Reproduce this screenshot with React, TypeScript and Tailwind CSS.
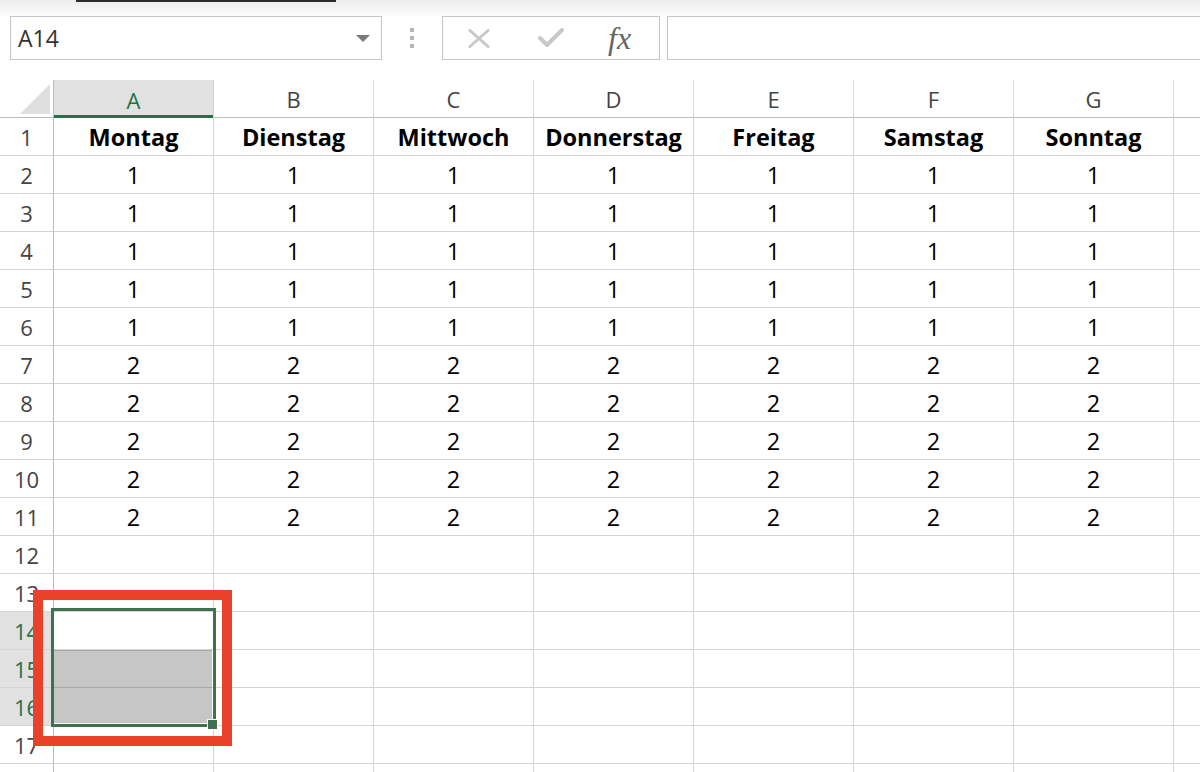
import React from 'react';

const COLS = ['A', 'B', 'C', 'D', 'E', 'F', 'G', 'H'];
const DAYS = ['Montag', 'Dienstag', 'Mittwoch', 'Donnerstag', 'Freitag', 'Samstag', 'Sonntag', ''];

const valueFor = (row: number, col: number) => {
  if (col > 6) return '';
  if (row === 1) return DAYS[col];
  if (row >= 2 && row <= 6) return '1';
  if (row >= 7 && row <= 11) return '2';
  return '';
};

const FormulaBar = () => (
  <div className="relative h-[80px] bg-white">
    <div className="absolute inset-x-0 top-0 h-[16px] bg-gradient-to-b from-[#ececec] to-[#fdfdfd]" />
    <div className="absolute left-[76px] top-0 h-[2px] w-[260px] bg-[#2b2b2b]" />
    <div className="relative flex items-start pt-[16px] pl-[10px]">
      {/* Name box */}
      <div className="flex h-[44px] w-[372px] items-center justify-between border border-[#c6c6c6] bg-white pl-[7px] pr-[11px]">
        <span className="text-[23px] text-[#333]">A14</span>
        <svg width="14" height="7" viewBox="0 0 14 7">
          <polygon points="0,0 14,0 7,7" fill="#7a7a7a" />
        </svg>
      </div>
      {/* Separator dots */}
      <div className="flex w-[60px] flex-col items-center gap-[4px] pt-[12px]">
        <div className="h-[4px] w-[4px] bg-[#b4b4b4]" />
        <div className="h-[4px] w-[4px] bg-[#b4b4b4]" />
        <div className="h-[4px] w-[4px] bg-[#b4b4b4]" />
      </div>
      {/* Cancel / enter / fx */}
      <div className="flex h-[44px] w-[218px] items-center border border-[#c6c6c6] bg-white">
        <svg width="22" height="19" viewBox="0 0 22 19" className="ml-[25px]">
          <path d="M2 1.5 L20 17.5 M20 1.5 L2 17.5" stroke="#c8c8c8" strokeWidth="3" strokeLinecap="round" />
        </svg>
        <svg width="26" height="20" viewBox="0 0 26 20" className="ml-[48px]">
          <path d="M2 10 L9 17 L24 2" stroke="#c8c8c8" strokeWidth="4" fill="none" strokeLinecap="round" strokeLinejoin="round" />
        </svg>
        <span
          className="ml-[44px] text-[32px] italic leading-none text-[#666]"
          style={{ fontFamily: '"Liberation Serif", serif' }}
        >
          fx
        </span>
      </div>
      {/* Formula input */}
      <div className="ml-[7px] h-[44px] flex-1 border border-r-0 border-[#c6c6c6] bg-white" />
    </div>
  </div>
);

export default function App() {
  const rows = Array.from({ length: 18 }, (_, i) => i + 1);
  const selectedRows = [14, 15, 16];

  return (
    <div
      className="relative h-[772px] w-[1200px] overflow-hidden bg-white"
      style={{ fontFamily: '"Open Sans", sans-serif' }}
    >
      <FormulaBar />

      <div className="grid grid-cols-[54px_repeat(8,160px)]">
        {/* Header row */}
        <div className="relative h-[38px] border-r border-b border-[#bdbdbd]">
          <svg width="54" height="38" viewBox="0 0 54 38" className="absolute inset-0">
            <polygon points="50,4 50,34 20,34" fill="#dfdfdf" />
          </svg>
        </div>
        {COLS.map((c, i) =>
          i === 0 ? (
            <div
              key={c}
              className="flex h-[38px] items-center justify-center border-r border-[#d4d4d4] bg-[#e1e1e1] pt-[2px] text-[22px] text-[#217346]"
              style={{ boxShadow: 'inset 0 -3px 0 #217346' }}
            >
              {c}
            </div>
          ) : (
            <div
              key={c}
              className="flex h-[38px] items-center justify-center border-r border-b border-r-[#dadada] border-b-[#bdbdbd] pt-[2px] text-[22px] text-[#444]"
            >
              {c === 'H' ? '' : c}
            </div>
          )
        )}

        {rows.map((r) => (
          <React.Fragment key={r}>
            <div
              className={
                selectedRows.includes(r)
                  ? 'flex h-[38px] items-center justify-center border-r border-b border-r-[#bdbdbd] border-b-[#d4d4d4] bg-[#e1e1e1] pt-[2px] text-[22px] text-[#217346]'
                  : 'flex h-[38px] items-center justify-center border-r border-b border-r-[#bdbdbd] border-b-[#d4d4d4] pt-[2px] text-[22px] text-[#444]'
              }
            >
              {r < 18 ? r : ''}
            </div>
            {COLS.map((c, ci) => (
              <div
                key={c}
                className={
                  r === 1
                    ? 'flex h-[38px] items-center justify-center border-r border-b border-[#d4d4d4] pt-[2px] text-[23.5px] font-bold text-black'
                    : 'flex h-[38px] items-center justify-center border-r border-b border-[#d4d4d4] pt-[2px] text-[23.5px] text-black'
                }
              >
                {valueFor(r, ci)}
              </div>
            ))}
          </React.Fragment>
        ))}
      </div>

      {/* Selection range A14:A16 */}
      <div className="absolute left-[51px] top-[608px] h-[119px] w-[165px] border-[3px] border-[#3f704f]">
        <div className="absolute left-[0px] right-[1px] top-[39px] bottom-[1px] bg-[#c6c6c6]">
          <div className="absolute inset-x-0 top-0 h-px bg-[#a6a6a6]" />
          <div className="absolute inset-x-0 top-[37px] h-px bg-[#a6a6a6]" />
        </div>
      </div>
      <div className="absolute left-[207px] top-[719px] h-[11px] w-[11px] border border-white bg-[#3f704f]" />

      {/* Red highlight */}
      <div className="absolute left-[33px] top-[590px] h-[156px] w-[199px] border-[10px] border-[#e9412a]" />
    </div>
  );
}
